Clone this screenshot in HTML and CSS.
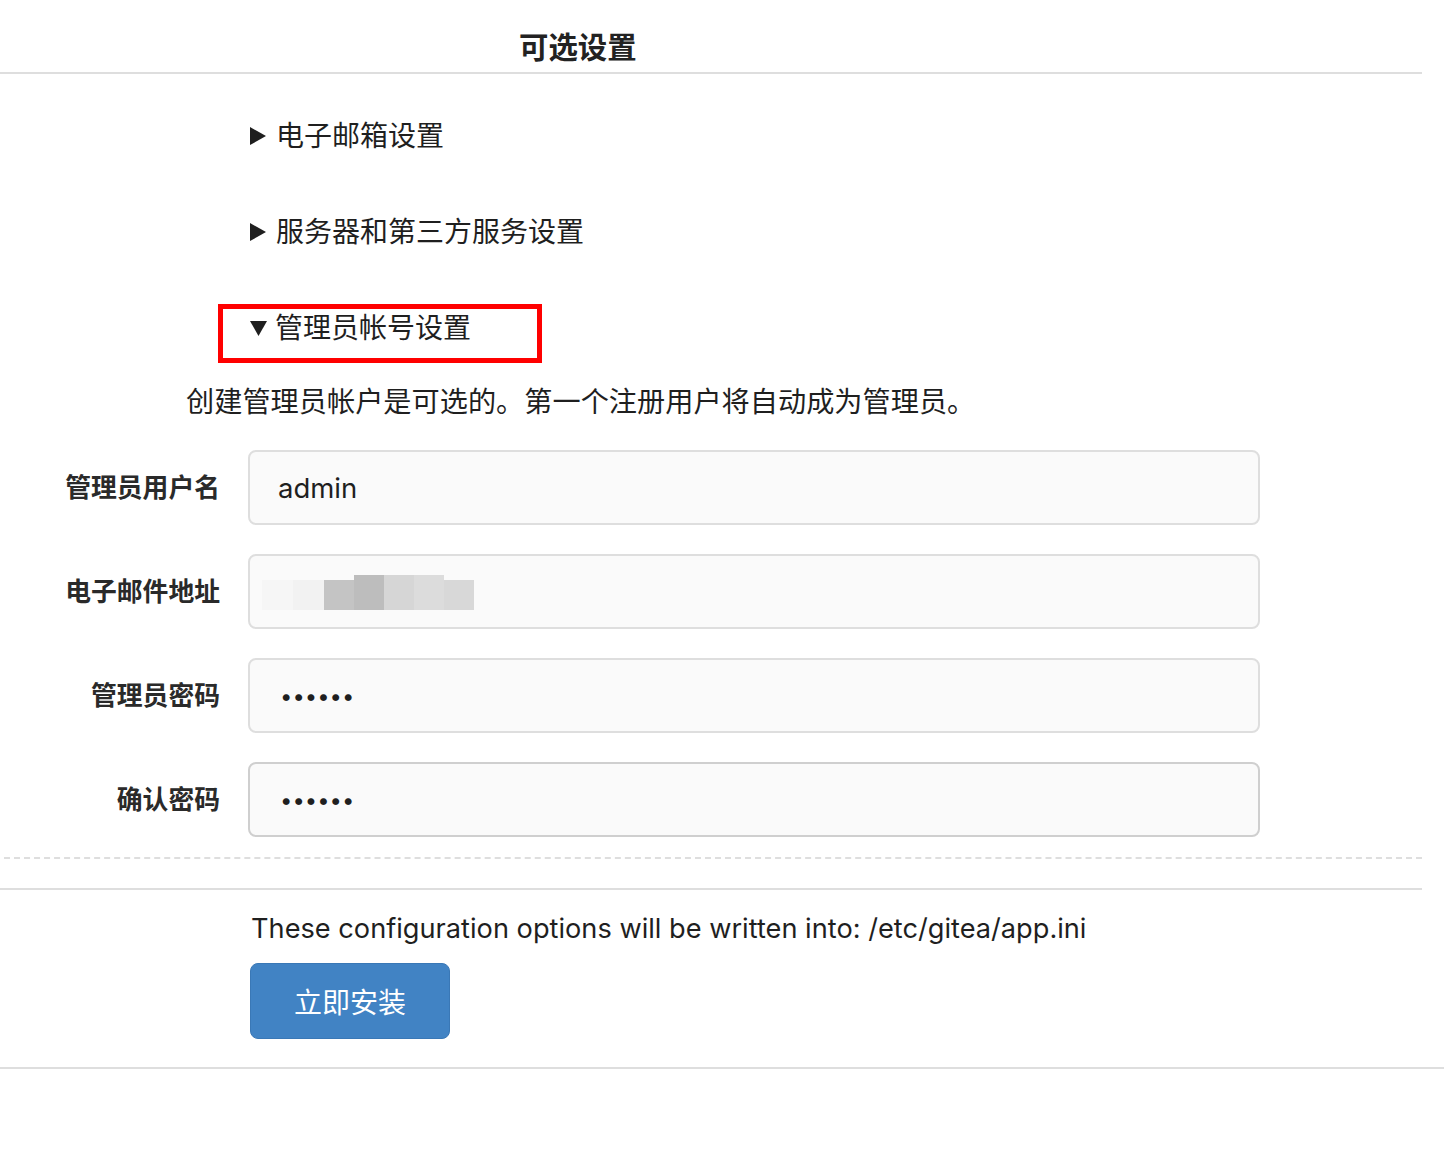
FILE: index.html
```html
<!DOCTYPE html>
<html lang="zh-CN">
<head>
<meta charset="utf-8">
<title>可选设置</title>
<link rel="stylesheet" href="styles.css">
</head>
<body>
<div class="page">
  <div class="header"><h3 class="title">可选设置</h3></div>

  <div class="item item-first">
    <svg class="tri-right" width="16" height="18" viewBox="0 0 16 18"><polygon points="0,0 16,9 0,18" fill="#1f1f1f"/></svg>
    <span>电子邮箱设置</span>
  </div>
  <div class="item item-second">
    <svg class="tri-right" width="16" height="18" viewBox="0 0 16 18"><polygon points="0,0 16,9 0,18" fill="#1f1f1f"/></svg>
    <span>服务器和第三方服务设置</span>
  </div>
  <div class="item-box-wrap">
    <div class="item item-open">
      <svg class="tri-down" width="17" height="15" viewBox="0 0 17 15"><polygon points="0,0 17,0 8.5,15" fill="#1f1f1f"/></svg>
      <span>管理员帐号设置</span>
    </div>
  </div>

  <p class="desc">创建管理员帐户是可选的。第一个注册用户将自动成为管理员。</p>

  <div class="fields">
    <div class="row">
      <label class="label">管理员用户名</label>
      <div class="input"><span class="value">admin</span></div>
    </div>
    <div class="row">
      <label class="label">电子邮件地址</label>
      <div class="input">
        <div class="blur">
          <span class="px p0"></span>
          <span class="px p1"></span>
          <span class="px p2"></span>
          <span class="px p3 tall"></span>
          <span class="px p4 tall"></span>
          <span class="px p5 tall"></span>
          <span class="px p6"></span>
        </div>
      </div>
    </div>
    <div class="row">
      <label class="label">管理员密码</label>
      <div class="input"><span class="dots">••••••</span></div>
    </div>
    <div class="row">
      <label class="label">确认密码</label>
      <div class="input input-dark"><span class="dots">••••••</span></div>
    </div>
  </div>

  <div class="footer">
    <p class="note">These configuration options will be written into: /etc/gitea/app.ini</p>
    <button class="btn">立即安装</button>
  </div>
</div>
</body>
</html>
```
FILE: styles.css
```css
html, body {
  margin: 0;
  padding: 0;
  background: #ffffff;
}
body {
  font-family: Inter, "Noto Sans CJK SC", sans-serif;
  color: #212121;
  width: 1444px;
  text-spacing-trim: space-all;
}
.page {
  display: flex;
  flex-direction: column;
  border-bottom: 2px solid #dedede;
  padding-bottom: 28px;
}
.header {
  width: 1422px;
  height: 72px;
  border-bottom: 2px solid #dedede;
  box-sizing: content-box;
}
.title {
  margin: 0;
  padding: 32px 0 0 519px;
  font-size: 29.4px;
  line-height: 32px;
  font-weight: 700;
  color: #222;
}
.item {
  display: flex;
  align-items: center;
  font-size: 28px;
  line-height: 32px;
  height: 32px;
  color: #1f1f1f;
}
.item-first {
  margin: 46px 0 0 250px;
}
.item-second {
  margin: 64px 0 0 250px;
}
.tri-right {
  margin-right: 10px;
  flex: none;
}
.tri-down {
  margin-right: 8px;
  flex: none;
}
.item-box-wrap {
  margin: 56px 0 0 218px;
  width: 324px;
  height: 59px;
  border: 5px solid #ff0000;
  box-sizing: border-box;
  padding: 3px 0 0 27px;
}
.desc {
  margin: 23px 0 0 186px;
  font-size: 28.2px;
  line-height: 32px;
  color: #1f1f1f;
}
.fields {
  margin-top: 32px;
  display: flex;
  flex-direction: column;
  gap: 29px;
  margin-left: 4px;
  width: 1418px;
  padding-bottom: 20px;
  border-bottom: 2px dashed #dedede;
}
.row {
  display: flex;
  align-items: center;
  margin-left: -4px;
}
.label {
  width: 220px;
  text-align: right;
  font-size: 25.8px;
  font-weight: 700;
  color: #2a2a2a;
  line-height: 32px;
}
.input {
  margin-left: 28px;
  width: 1012px;
  height: 75px;
  box-sizing: border-box;
  border: 2px solid #dedede;
  border-radius: 8px;
  background: #fafafa;
  display: flex;
  align-items: center;
  padding-left: 28px;
}
.input-dark {
  border-color: #cfcfcf;
}
.value {
  font-size: 27.5px;
  color: #1f1f1f;
}
.dots {
  font-size: 22px;
  letter-spacing: 0px;
  color: #1f1f1f;
  padding-left: 2px;
}
.blur {
  display: flex;
  align-items: flex-end;
  margin-left: -16px;
  height: 36px;
}
.px {
  display: block;
  width: 30px;
  height: 30px;
}
.px.tall {
  height: 35px;
}
.p0 { width: 31px; background: #f6f6f6; }
.p1 { width: 31px; background: #f2f2f2; }
.p2 { background: #c4c4c4; }
.p3 { background: #bdbdbd; }
.p4 { background: #d6d6d6; }
.p5 { background: #dcdcdc; }
.p6 { background: #d8d8d8; }
.footer {
  margin-top: 29px;
  width: 1422px;
  border-top: 2px solid #dedede;
  display: flex;
  flex-direction: column;
  align-items: flex-start;
  padding-left: 250px;
  box-sizing: border-box;
}
.note {
  margin: 23px 0 0 1px;
  font-size: 27.2px;
  line-height: 32px;
  color: #1f1f1f;
}
.btn {
  margin-top: 18px;
  width: 200px;
  height: 76px;
  border: 1px solid #3a78b6;
  border-radius: 8px;
  background: #4183c4;
  color: #ffffff;
  font-family: Inter, "Noto Sans CJK SC", sans-serif;
  font-size: 28px;
  padding: 0;
}
```
